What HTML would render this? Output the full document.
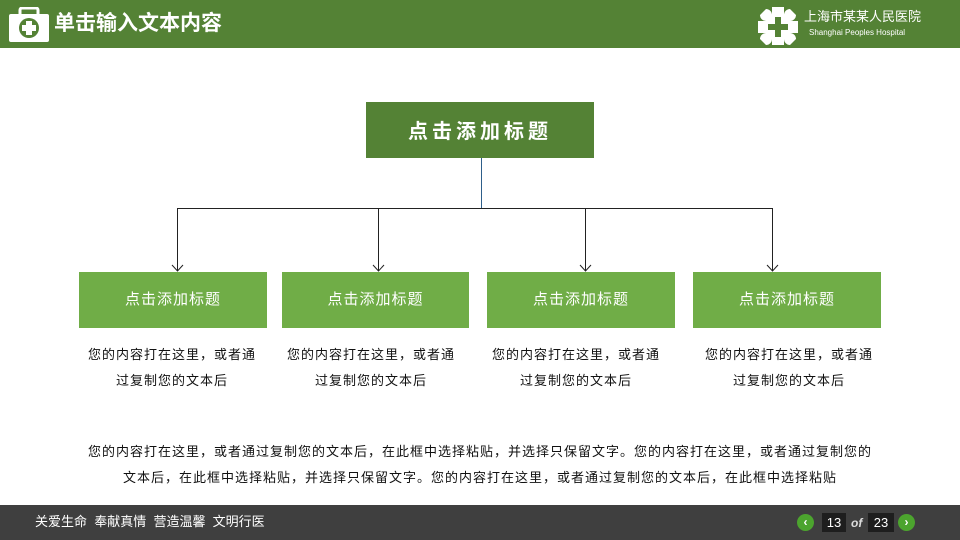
<!DOCTYPE html>
<html><head><meta charset="utf-8"><style>
body{margin:0;width:960px;height:540px;position:relative;overflow:hidden;background:#fff;font-family:"Liberation Sans","Noto Sans CJK SC",sans-serif}
.a{position:absolute}
.hdr{left:0;top:0;width:960px;height:48px;background:#548235}
.ft{left:0;top:505px;width:960px;height:35px;background:#3f3f3f}
.box{position:absolute;top:272px;height:56px;background:#70ad47;color:#fff;font-size:15px;letter-spacing:1px;line-height:56px;text-align:center}
.d{position:absolute;top:342px;font-size:13px;letter-spacing:1px;line-height:26px;text-align:center;color:#111}
</style></head><body>
<div class="a hdr"></div>
<svg class="a" style="left:8px;top:7px" width="42" height="36" viewBox="0 0 42 36">
<rect x="12" y="1" width="18" height="8" rx="2" fill="none" stroke="#fff" stroke-width="3"/>
<rect x="1" y="7" width="40" height="28" rx="2" fill="#fff"/>
<circle cx="21" cy="21" r="10" fill="#548235"/>
<path d="M18 14h6v4h4v6h-4v4h-6v-4h-4v-6h4z" fill="#fff"/>
</svg>
<div class="a" style="left:54px;top:10px;color:#fff;font-size:21px;font-weight:bold;line-height:28px">单击输入文本内容</div>
<svg class="a" style="left:756px;top:5px" width="44" height="40" viewBox="0 0 44 40">
<path d="M16 2h12v8a6 6 0 0 1 6-6l6 6a6 6 0 0 1-6 6h8v12h-8a6 6 0 0 1 6 6l-6 6a6 6 0 0 1-6-6v8H16v-8a6 6 0 0 1-6 6l-6-6a6 6 0 0 1 6-6H2V16h8a6 6 0 0 1-6-6l6-6a6 6 0 0 1 6 6z" fill="#fff"/>
<path d="M19 12h6v7h7v6h-7v7h-6v-7h-7v-6h7z" fill="#548235"/>
</svg>
<div class="a" style="left:804px;top:9px;color:#fff;font-size:13px;line-height:16px">上海市某某人民医院</div>
<div class="a" style="left:809px;top:28px;color:#fff;font-size:8px;line-height:10px">Shanghai Peoples Hospital</div>

<div class="a" style="left:366px;top:102px;width:228px;height:56px;background:#548235;color:#fff;font-size:20px;letter-spacing:4px;font-weight:bold;line-height:60px;text-align:center;text-indent:0px">点击添加标题</div>
<svg class="a" style="left:0;top:0" width="960" height="540">
<line x1="481.5" y1="158" x2="481.5" y2="208" stroke="#2e5f8a" stroke-width="1"/>
<line x1="177" y1="208.5" x2="773" y2="208.5" stroke="#222" stroke-width="1"/>
<g stroke="#222" stroke-width="1" fill="none">
<path d="M177.5 208v63M172 265l5.5 6 5.5-6"/>
<path d="M378.5 208v63M373 265l5.5 6 5.5-6"/>
<path d="M585.5 208v63M580 265l5.5 6 5.5-6"/>
<path d="M772.5 208v63M767 265l5.5 6 5.5-6"/>
</g>
</svg>
<div class="box" style="left:79px;width:188px">点击添加标题</div>
<div class="box" style="left:282px;width:187px">点击添加标题</div>
<div class="box" style="left:487px;width:188px">点击添加标题</div>
<div class="box" style="left:693px;width:188px">点击添加标题</div>
<div class="d" style="left:72px;width:200px">您的内容打在这里，或者通<br>过复制您的文本后</div>
<div class="d" style="left:271px;width:200px">您的内容打在这里，或者通<br>过复制您的文本后</div>
<div class="d" style="left:476px;width:200px">您的内容打在这里，或者通<br>过复制您的文本后</div>
<div class="d" style="left:689px;width:200px">您的内容打在这里，或者通<br>过复制您的文本后</div>
<div class="a" style="left:60px;top:439px;width:840px;text-align:center;font-size:13px;letter-spacing:1px;line-height:26px;color:#111">您的内容打在这里，或者通过复制您的文本后，在此框中选择粘贴，并选择只保留文字。您的内容打在这里，或者通过复制您的<br>文本后，在此框中选择粘贴，并选择只保留文字。您的内容打在这里，或者通过复制您的文本后，在此框中选择粘贴</div>

<div class="a ft"></div>
<div class="a" style="left:35px;top:513px;color:#fff;font-size:13px;line-height:18px">关爱生命&nbsp; 奉献真情&nbsp; 营造温馨&nbsp; 文明行医</div>
<div class="a" style="left:797px;top:514px;width:17px;height:17px;border-radius:50%;background:#4ca42e;color:#fff;font-size:12px;font-weight:bold;line-height:17px;text-align:center">&lsaquo;</div>
<div class="a" style="left:822px;top:513px;width:24px;height:19px;background:#1e1e1e;color:#fff;font-size:13px;line-height:19px;text-align:center">13</div>
<div class="a" style="left:851px;top:514px;color:#ddd;font-size:12px;font-style:italic;font-weight:bold;line-height:18px">of</div>
<div class="a" style="left:868px;top:513px;width:26px;height:19px;background:#1e1e1e;color:#fff;font-size:13px;line-height:19px;text-align:center">23</div>
<div class="a" style="left:898px;top:514px;width:17px;height:17px;border-radius:50%;background:#4ca42e;color:#fff;font-size:12px;font-weight:bold;line-height:17px;text-align:center">&rsaquo;</div>
</body></html>
